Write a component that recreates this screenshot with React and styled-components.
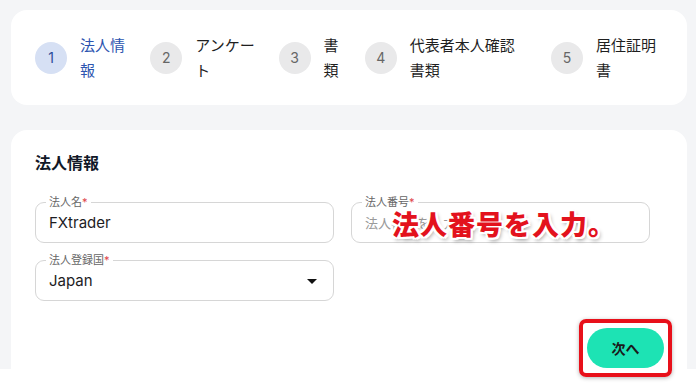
import React from 'react'
import styled, { createGlobalStyle } from 'styled-components'

const GlobalStyle = createGlobalStyle`
  html, body {
    margin: 0;
    background: #ffffff;
    font-family: Inter, "Noto Sans CJK JP", sans-serif;
  }
  #root {
    min-height: 386px;
  }
`

const steps = [
  { n: 1, label: '法人情報', w: 47, active: true },
  { n: 2, label: 'アンケート', w: 60 },
  { n: 3, label: '書類', w: 18 },
  { n: 4, label: '代表者本人確認書類', w: 118 },
  { n: 5, label: '居住証明書', w: 60 },
]

const App = () => {
  return (
    <Page>
      <GlobalStyle />
      <StepCard>
        <Steps>
          {steps.map((s) => (
            <Step key={s.n}>
              <Circle $active={s.active}>{s.n}</Circle>
              <StepLabel $active={s.active} $w={s.w}>{s.label}</StepLabel>
            </Step>
          ))}
        </Steps>
      </StepCard>

      <FormCard>
        <Title>法人情報</Title>
        <Grid>
          <Field>
            <FieldLabel>法人名<Req>*</Req></FieldLabel>
            <Value>FXtrader</Value>
          </Field>
          <Field>
            <FieldLabel>法人番号<Req>*</Req></FieldLabel>
            <Placeholder>法人番号を入力</Placeholder>
            <Callout>法人番号を入力。</Callout>
          </Field>
          <Field>
            <FieldLabel>法人登録国<Req>*</Req></FieldLabel>
            <Value>Japan</Value>
            <Arrow viewBox="0 0 24 24" width="24" height="24">
              <path d="M7 10l5 5 5-5z" fill="#111" />
            </Arrow>
          </Field>
        </Grid>
        <Actions>
          <Highlight>
            <NextButton>次へ</NextButton>
          </Highlight>
        </Actions>
      </FormCard>
    </Page>
  )
}

export default App

const Page = styled.div`
  height: 369px;
  box-sizing: border-box;
  background: #f4f5f7;
  padding: 10px 9px 0 11px;
  display: flex;
  flex-direction: column;
  gap: 25px;
`
const StepCard = styled.div`
  height: 95px;
  flex-shrink: 0;
  box-sizing: border-box;
  background: #fff;
  border-radius: 16px;
  padding: 0 31px 0 24px;
  display: flex;
  align-items: center;
`
const Steps = styled.div`
  flex: 1;
  display: flex;
  align-items: center;
  justify-content: space-between;
`
const Step = styled.div`
  display: flex;
  align-items: center;
  gap: 13px;
`
const Circle = styled.div`
  width: 32px;
  height: 32px;
  border-radius: 50%;
  background: ${(p) => (p.$active ? '#d6e0f4' : '#e9e9ea')};
  color: ${(p) => (p.$active ? '#2c4d9a' : '#666')};
  font-size: 14px;
  display: flex;
  align-items: center;
  justify-content: center;
  flex-shrink: 0;
`
const StepLabel = styled.div`
  width: ${(p) => p.$w}px;
  font-size: 15px;
  line-height: 25px;
  color: ${(p) => (p.$active ? '#2d55b0' : '#1f1f1f')};
  word-break: break-all;
`
const FormCard = styled.div`
  flex: 1;
  background: #fff;
  border-radius: 16px 16px 0 0;
  padding: 22px 15px 0 24px;
  display: flex;
  flex-direction: column;
`
const Title = styled.div`
  font-size: 16px;
  line-height: 22px;
  font-weight: 700;
  color: #111827;
`
const Grid = styled.div`
  margin-top: 28px;
  display: grid;
  grid-template-columns: 299px 299px;
  column-gap: 17px;
  row-gap: 17px;
`
const Field = styled.div`
  position: relative;
  height: 41px;
  box-sizing: border-box;
  border: 1px solid #d6d6d6;
  border-radius: 9px;
  padding: 0 13px;
  display: flex;
  align-items: center;
`
const FieldLabel = styled.span`
  position: absolute;
  top: -8px;
  left: 10px;
  padding: 0 3px;
  background: #fff;
  font-size: 11px;
  line-height: 14px;
  color: #666;
`
const Req = styled.span`
  color: #e0454b;
`
const Value = styled.span`
  font-size: 15px;
  color: #1d1d1f;
`
const Placeholder = styled.span`
  font-size: 13px;
  color: #9a9a9a;
`
const Callout = styled.span`
  position: absolute;
  left: 40px;
  top: 50%;
  transform: translateY(-50%);
  font-size: 27px;
  font-weight: 900;
  letter-spacing: 1px;
  color: #e3121d;
  white-space: nowrap;
  text-shadow:
    2px 0 0 #fff, -2px 0 0 #fff, 0 2px 0 #fff, 0 -2px 0 #fff,
    2px 2px 0 #fff, -2px -2px 0 #fff, 2px -2px 0 #fff, -2px 2px 0 #fff,
    2px 3px 4px rgba(0, 0, 0, 0.45);
`
const Arrow = styled.svg`
  position: absolute;
  right: 9px;
  top: 50%;
  transform: translateY(-50%);
`
const Actions = styled.div`
  margin-top: 18px;
  display: flex;
  justify-content: flex-end;
`
const Highlight = styled.div`
  border: 4px solid #e8101a;
  border-radius: 7px;
  padding: 5px 4px;
  box-shadow: 0 1px 4px rgba(0, 0, 0, 0.3);
`
const NextButton = styled.button`
  width: 77px;
  height: 40px;
  border: none;
  border-radius: 20px;
  background: #1de3b4;
  font-family: Inter, "Noto Sans CJK JP", sans-serif;
  font-size: 14px;
  font-weight: 700;
  color: #1a1a1a;
  display: block;
`
